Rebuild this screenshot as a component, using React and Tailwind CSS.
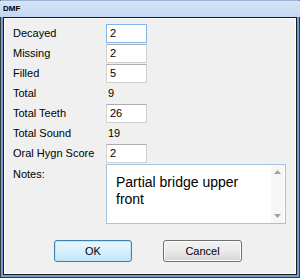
const rows = [
  { label: "Decayed", value: "2", input: true, focus: true },
  { label: "Missing", value: "2", input: true },
  { label: "Filled", value: "5", input: true },
  { label: "Total", value: "9" },
  { label: "Total Teeth", value: "26", input: true },
  { label: "Total Sound", value: "19" },
  { label: "Oral Hygn Score", value: "2", input: true },
];

function Field({ value, focus }) {
  return (
    <div
      className={
        "w-[41px] h-[19px] bg-white border flex items-center pl-[3px] " +
        (focus ? "border-[#7eb4ea]" : "border-[#d0d0d0] border-t-[#abadb3]")
      }
    >
      {value}
    </div>
  );
}

export default function App() {
  return (
    <div
      className="w-[300px] h-[278px] bg-[#6f9fd6] border border-[#3a3a3a] border-t-[#9bb5d8] flex flex-col text-black"
      style={{ fontFamily: '"Liberation Sans", Arial, sans-serif' }}
    >
      {/* Title bar */}
      <div className="h-[16px] bg-gradient-to-b from-[#d6e5f6] to-[#c3d7ef] flex items-center pl-[3px] -mx-px">
        <span className="text-[8px] font-bold leading-none text-black">DMF</span>
      </div>

      {/* Client area */}
      <div className="flex-1 mx-[2px] mb-[2px] border border-[#1a1a1a] bg-white p-px">
        <div className="h-full bg-[#f0f0f0] flex flex-col pt-[4px] pl-[8px] text-[11px]">
          {rows.map((r) => (
            <div key={r.label} className="h-[20px] flex items-center">
              <span className="w-[93px]">{r.label}</span>
              {r.input ? (
                <Field value={r.value} focus={r.focus} />
              ) : (
                <span className="pl-[2px]">{r.value}</span>
              )}
            </div>
          ))}

          {/* Notes */}
          <div className="flex pt-[1px]">
            <span className="w-[93px] pt-[2px]">Notes:</span>
            <div className="w-[180px] h-[60px] bg-white border border-[#a7c2de] flex">
              <div className="flex-1 pl-[9px] pt-[9px] text-[14px] leading-[17px]">
                Partial bridge upper
                <br />
                front
              </div>
              <div className="w-[13px] bg-[#f6f6f6] flex flex-col items-center justify-between py-[5px] mr-px">
                <svg width="7" height="4" viewBox="0 0 7 4">
                  <path d="M0 4 L3.5 0 L7 4 Z" fill="#a0a0a0" />
                </svg>
                <svg width="7" height="4" viewBox="0 0 7 4">
                  <path d="M0 0 L3.5 4 L7 0 Z" fill="#a0a0a0" />
                </svg>
              </div>
            </div>
          </div>

          {/* Buttons */}
          <div className="flex pt-[16px] pl-[41px] gap-[31px]">
            <button className="w-[78px] h-[22px] rounded-[3px] border border-[#3c7fb1] bg-gradient-to-b from-[#eaf6fd] via-[#d9f0fc] to-[#bee6fd] text-[11px] shadow-[inset_0_0_0_1px_#bfe3f8]">
              OK
            </button>
            <button className="w-[79px] h-[22px] rounded-[3px] border border-[#707070] bg-gradient-to-b from-[#f2f2f2] via-[#ebebeb] to-[#d5d5d5] text-[11px] shadow-[inset_0_0_0_1px_#fcfcfc]">
              Cancel
            </button>
          </div>
        </div>
      </div>
    </div>
  );
}
